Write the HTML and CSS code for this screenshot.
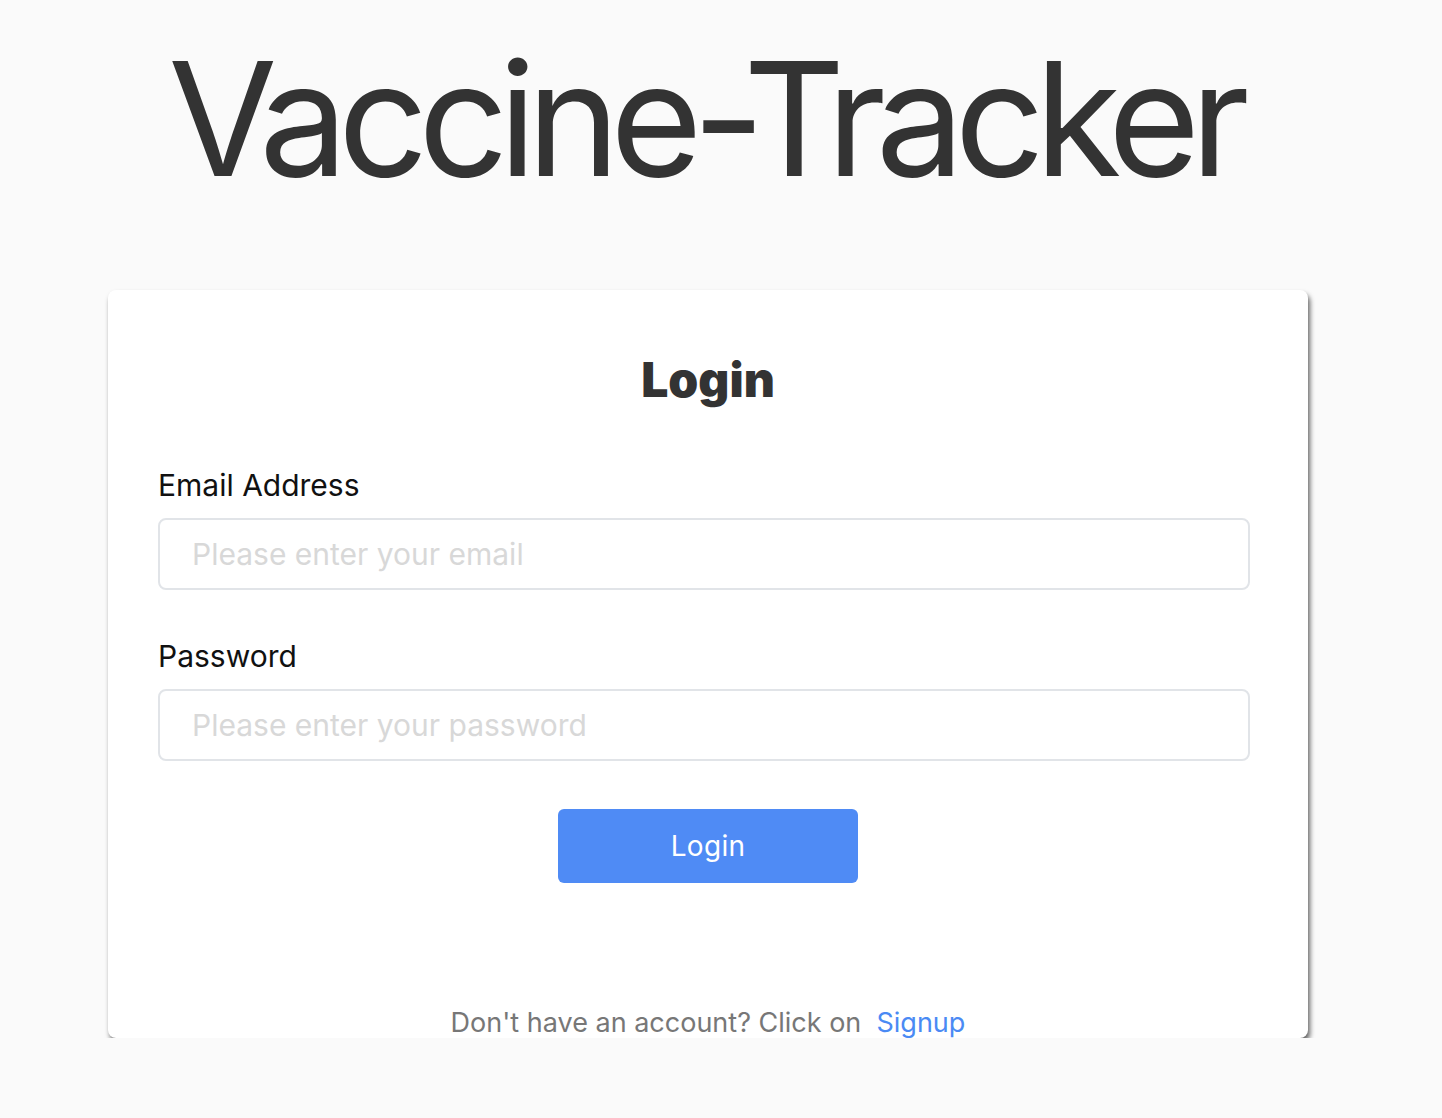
FILE: index.html
```html
<!DOCTYPE html>
<html>
<head>
<meta charset="utf-8">
<link rel="stylesheet" href="styles.css">
</head>
<body>
<div class="page">
  <h1 class="title">Vaccine-Tracker</h1>
  <div class="card">
    <h2 class="card-title">Login</h2>
    <form class="form">
      <label class="field">
        <span class="label">Email Address</span>
        <input class="input" type="email" placeholder="Please enter your email">
      </label>
      <label class="field">
        <span class="label">Password</span>
        <input class="input" type="password" placeholder="Please enter your password">
      </label>
    </form>
    <div class="actions">
      <button class="btn" type="button">Login</button>
    </div>
    <p class="footer">Don't have an account? Click on&nbsp; <a class="link" href="#">Signup</a></p>
  </div>
</div>
</body>
</html>
```
FILE: styles.css
```css
html, body {
  margin: 0;
  padding: 0;
  background: #fafafa;
  font-family: Inter, "Noto Sans", sans-serif;
}
.page {
  width: 1200px;
  margin-left: 108px;
  padding-top: 24px;
}
.title {
  margin: 0;
  text-align: center;
  white-space: nowrap;
  font-size: 158px;
  font-weight: 400;
  color: #333;
  line-height: 190px;
  letter-spacing: -10px;
  text-indent: -8px;
}
.card {
  margin-top: 76px;
  background: #fff;
  border-radius: 8px;
  box-shadow: 2px 4px 5px rgba(0,0,0,0.6);
  height: 748px;
  box-sizing: border-box;
  padding: 50px 50px 0 50px;
  display: flex;
  flex-direction: column;
}
.card-title {
  margin: 0;
  text-align: center;
  font-size: 48px;
  font-weight: 900;
  color: #333;
  line-height: 80px;
}
.form {
  display: flex;
  flex-direction: column;
  gap: 46px;
  margin-top: 45px;
  padding-right: 8px;
}
.field {
  display: flex;
  flex-direction: column;
}
.label {
  font-size: 30px;
  color: #111;
  line-height: 40px;
  margin-bottom: 13px;
}
.input {
  height: 72px;
  box-sizing: border-box;
  border: 2px solid #e1e4e8;
  border-radius: 8px;
  padding: 0 32px;
  font-family: inherit;
  font-size: 30px;
  color: #333;
  outline: none;
}
.input::placeholder {
  color: #d8d8d8;
}
.actions {
  display: flex;
  justify-content: center;
  margin-top: 48px;
}
.btn {
  width: 300px;
  height: 74px;
  border: none;
  border-radius: 6px;
  background: #4f8bf5;
  color: #fff;
  font-family: inherit;
  font-size: 28px;
  letter-spacing: 0.3px;
}
.footer {
  margin: auto 0 0;
  text-align: center;
  font-size: 27px;
  color: #777;
  line-height: 34px;
  transform: translateY(2px);
}
.link {
  color: #4a8af4;
  text-decoration: none;
}
```
